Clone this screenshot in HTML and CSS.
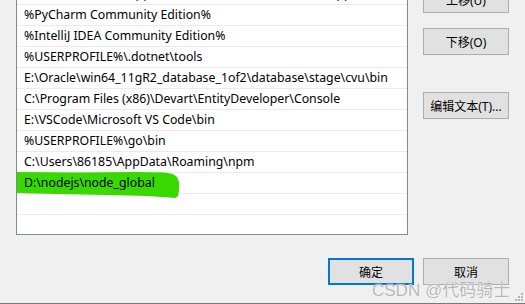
FILE: index.html
```html
<!DOCTYPE html>
<html>
<head>
<meta charset="utf-8">
<link rel="stylesheet" href="styles.css">
</head>
<body>
<div class="window">
  <div class="main">
    <div class="list">
      <div class="row">%USERPROFILE%\AppData\Local\Microsoft\WindowsApps</div>
      <div class="row">%PyCharm Community Edition%</div>
      <div class="row">%IntelliJ IDEA Community Edition%</div>
      <div class="row">%USERPROFILE%\.dotnet\tools</div>
      <div class="row">E:\Oracle\win64_11gR2_database_1of2\database\stage\cvu\bin</div>
      <div class="row">C:\Program Files (x86)\Devart\EntityDeveloper\Console</div>
      <div class="row">E:\VSCode\Microsoft VS Code\bin</div>
      <div class="row">%USERPROFILE%\go\bin</div>
      <div class="row">C:\Users\86185\AppData\Roaming\npm</div>
      <div class="row marked">
        <svg class="marker" width="165" height="28" viewBox="0 0 165 28"><path d="M0 0 L60 0.5 L120 0 L148 0.5 L156 2 L160 5 L162 10 L162 18 L161 24 L158 26 L152 25.5 L130 24 L90 23 L40 22 L0 21 Z" fill="#38d900"/></svg>
        <span class="label">D:\nodejs\node_global</span>
      </div>
      <div class="row"></div>
    </div>
    <div class="side">
      <button class="btn">上移(U)</button>
      <button class="btn">下移(O)</button>
      <button class="btn btn-gap">编辑文本(T)...</button>
    </div>
  </div>
  <div class="footer">
    <button class="btn default">确定</button>
    <button class="btn">取消</button>
  </div>
  <div class="watermark">CSDN @代码骑士</div>
  <svg class="grip" width="8" height="8" viewBox="0 0 8 8"><g fill="#b4b4b4"><rect x="6" y="0" width="2" height="2"/><rect x="3" y="3" width="2" height="2"/><rect x="6" y="3" width="2" height="2"/><rect x="0" y="6" width="2" height="2"/><rect x="3" y="6" width="2" height="2"/><rect x="6" y="6" width="2" height="2"/></g></svg>
</div>
</body>
</html>
```
FILE: styles.css
```css
* { box-sizing: border-box; }
html, body {
  margin: 0;
  padding: 0;
  background: #f0f0f0;
  overflow: hidden;
}
.window {
  position: relative;
  width: 525px;
  height: 304px;
  border-bottom: 1px solid #7a7a7a;
  font-family: "Noto Sans", "Noto Sans CJK SC", sans-serif;
  font-size: 12px;
  color: #000;
  overflow: hidden;
}
.main {
  display: flex;
  align-items: flex-start;
  padding-left: 16px;
  margin-top: -17px;
}
.list {
  position: relative;
  width: 392px;
  height: 252px;
  background: #fff;
  border: 1px solid #828790;
  overflow: hidden;
  font-size: 12.3px;
}
.row {
  position: relative;
  height: 21px;
  line-height: 20px;
  padding-left: 7px;
  border-bottom: 1px solid #ebebeb;
  white-space: nowrap;
}
.marker {
  position: absolute;
  left: 0;
  top: -1px;
}
.label {
  position: relative;
}
.side {
  display: flex;
  flex-direction: column;
  gap: 15px;
  margin-left: 15px;
  padding-top: 3px;
}
.btn {
  width: 86px;
  height: 27px;
  margin: 0;
  padding: 0;
  background: #e1e1e1;
  border: 1px solid #adadad;
  font-family: "Noto Sans", "Noto Sans CJK SC", sans-serif;
  font-size: 12px;
  color: #000;
}
.btn-gap {
  margin-top: 22px;
}
.default {
  border: 2px solid #0078d7;
}
.footer {
  display: flex;
  justify-content: flex-end;
  gap: 9px;
  padding-right: 16px;
  margin-top: 23px;
}
.watermark {
  position: absolute;
  left: 372px;
  top: 276px;
  font-family: "Liberation Sans", "Noto Sans CJK SC", sans-serif;
  font-size: 17px;
  color: rgba(150, 150, 150, 0.7);
  text-shadow: 0 0 1px #fff, 0 0 1px #fff;
  white-space: nowrap;
}
.grip {
  position: absolute;
  right: 2px;
  bottom: 2px;
}
```
